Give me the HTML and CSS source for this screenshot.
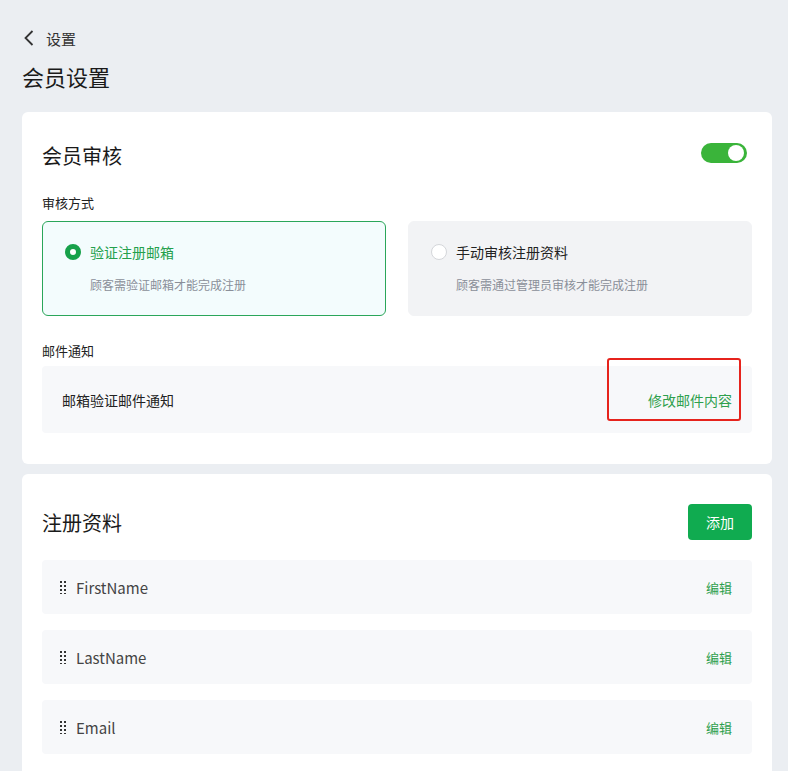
FILE: index.html
```html
<!DOCTYPE html>
<html>
<head>
  <meta charset="UTF-8">
  <title>会员设置</title>
  <link rel="stylesheet" href="styles.css">
</head>
<body>
  <div class="page">
    <div class="back">
      <svg width="12" height="18" viewBox="0 0 12 18"><path d="M9.5 2 L2.5 9 L9.5 16" fill="none" stroke="#333" stroke-width="1.8"/></svg>
      <span>设置</span>
    </div>
    <h1 class="page-title">会员设置</h1>

    <div class="card card-audit">
      <div class="card-header">
        <h2>会员审核</h2>
        <div class="switch on"><span class="knob"></span></div>
      </div>

      <div class="field-label">审核方式</div>
      <div class="options">
        <div class="option selected">
          <div class="option-title"><span class="radio"></span>验证注册邮箱</div>
          <div class="option-desc">顾客需验证邮箱才能完成注册</div>
        </div>
        <div class="option">
          <div class="option-title"><span class="radio"></span>手动审核注册资料</div>
          <div class="option-desc">顾客需通过管理员审核才能完成注册</div>
        </div>
      </div>

      <div class="field-label mail-label">邮件通知</div>
      <div class="notice">
        <span>邮箱验证邮件通知</span>
        <a class="link">修改邮件内容</a>
        <div class="mark"></div>
      </div>
    </div>

    <div class="card card-fields">
      <div class="card-header">
        <h2>注册资料</h2>
        <button class="btn-add">添加</button>
      </div>
      <div class="rows">
        <div class="row"><span class="handle"></span><span class="row-name">FirstName</span><a class="link small">编辑</a></div>
        <div class="row"><span class="handle"></span><span class="row-name">LastName</span><a class="link small">编辑</a></div>
        <div class="row"><span class="handle"></span><span class="row-name">Email</span><a class="link small">编辑</a></div>
      </div>
    </div>
  </div>
</body>
</html>
```

FILE: styles.css
```css
body {
  margin: 0;
  background: #ebeef2;
  font-family: "Noto Sans CJK SC", "Noto Sans", sans-serif;
  color: #222;
  height: 771px;
  overflow: hidden;
}

.page {
  padding: 28px 16px 0 22px;
}

.back {
  display: flex;
  align-items: center;
  height: 20px;
  font-size: 15px;
  color: #333;
}

.back svg {
  margin: 0 11px 0 1px;
}

.page-title {
  margin: 13px 0 21px;
  font-size: 22px;
  line-height: 30px;
  font-weight: normal;
  color: #1a1a1a;
}

.card {
  background: white;
  border-radius: 6px;
  padding: 20px 20px 31px;
  margin-bottom: 10px;
}

.card-header {
  display: flex;
  justify-content: space-between;
  align-items: center;
  height: 46px;
}

.card-header h2 {
  margin: 0;
  font-size: 20px;
  font-weight: normal;
  color: #1a1a1a;
}

.switch {
  width: 46px;
  height: 20px;
  border-radius: 10px;
  background: #ccc;
  position: relative;
  margin-right: 5px;
  margin-top: -4px;
}

.switch.on {
  background: #3ab43a;
}

.knob {
  position: absolute;
  top: 2px;
  right: 3px;
  width: 16px;
  height: 16px;
  border-radius: 50%;
  background: white;
}

.field-label {
  margin: 15px 0 8px;
  font-size: 13px;
  line-height: 20px;
  color: #222;
}

.mail-label {
  margin: 25px 0 5px;
}

.options {
  display: flex;
  gap: 22px;
}

.option {
  flex: 1;
  border: 1px solid #f2f3f5;
  background: #f2f3f5;
  border-radius: 6px;
  padding: 20px 21px 21px 22px;
}

.option.selected {
  border-color: #2aa65a;
  background: #f3fcfd;
}

.option-title {
  display: flex;
  align-items: center;
  font-size: 14px;
  line-height: 20px;
  color: #222;
}

.option.selected .option-title {
  color: #23a04c;
}

.radio {
  width: 14px;
  height: 14px;
  border: 1px solid #d4d6da;
  border-radius: 50%;
  background: white;
  margin-right: 9px;
  box-sizing: content-box;
}

.option.selected .radio {
  width: 6px;
  height: 6px;
  border: 5px solid #17a14a;
}

.option-desc {
  margin: 14px 0 0 25px;
  font-size: 12px;
  line-height: 18px;
  color: #8a8f99;
}

.notice {
  position: relative;
  display: flex;
  justify-content: space-between;
  align-items: center;
  height: 67px;
  padding: 0 20px;
  background: #f7f8fa;
  border-radius: 4px;
  font-size: 14px;
}

.link {
  color: #2ea04d;
  cursor: pointer;
}

.link.small {
  font-size: 13px;
  margin-right: 1px;
}

.mark {
  position: absolute;
  left: 565px;
  top: -8px;
  width: 130px;
  height: 59px;
  border: 2px solid #e6231c;
  border-radius: 3px;
}

.card-fields {
  padding-top: 30px;
}

.card-fields .card-header {
  height: 36px;
}

.btn-add {
  width: 64px;
  height: 36px;
  border: none;
  border-radius: 4px;
  background: #10ab50;
  color: white;
  font-family: inherit;
  font-size: 14px;
  cursor: pointer;
}

.rows {
  margin-top: 20px;
  display: flex;
  flex-direction: column;
  gap: 16px;
}

.row {
  display: flex;
  align-items: center;
  height: 54px;
  padding: 0 19px 0 18px;
  background: #f7f8fa;
  border-radius: 4px;
}

.handle {
  width: 6px;
  height: 14px;
  margin-right: 10px;
  background-image: radial-gradient(circle, #333 0.9px, transparent 1.1px);
  background-size: 4px 4px;
  background-position: -1px 0;
}

.row-name {
  flex: 1;
  font-size: 15px;
  color: #444;
}
```
